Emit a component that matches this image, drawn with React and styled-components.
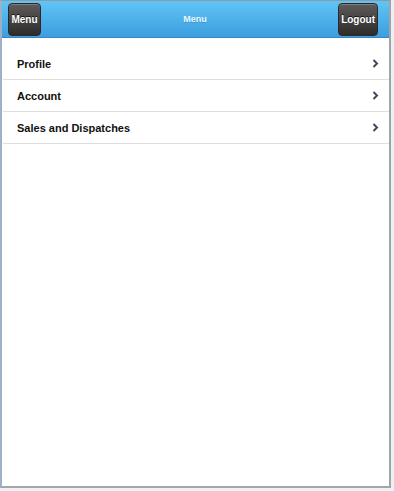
import React from "react";
import styled, { createGlobalStyle } from "styled-components";

const Global = createGlobalStyle`
  html, body { margin: 0; padding: 0; background: #eef1f4; }
  body { font-family: "Liberation Sans", Arial, sans-serif; }
`;

const Page = styled.div`
  width: 394px;
  height: 491px;
  box-sizing: border-box;
  padding: 0 3px 3px 0;
  background: #eef1f4;
`;

const Frame = styled.div`
  height: 100%;
  box-sizing: border-box;
  display: flex;
  flex-direction: column;
  background: #ffffff;
  border-top: 1px solid #8d99a6;
  border-left: 2px solid #9fb0c6;
  border-right: 2px solid #a3a3a3;
  border-bottom: 2px solid #a6a6a6;
`;

const Header = styled.header`
  height: 37px;
  box-sizing: border-box;
  display: grid;
  grid-template-columns: 1fr auto 1fr;
  align-items: center;
  padding: 0 11px 0 6px;
  background: linear-gradient(#60c5f6, #3c9edf);
  border-bottom: 1px solid #3a88bf;
`;

const HeadButton = styled.button`
  justify-self: ${(p) => p.$side};
  height: 33px;
  min-width: ${(p) => p.$w}px;
  box-sizing: border-box;
  padding: 0 2px;
  margin-top: 1px;
  border: 1px solid #2a2a2a;
  border-radius: 4px;
  background: linear-gradient(#5e5a5a, #2f2c2c);
  box-shadow: inset 0 1px 0 rgba(255, 255, 255, 0.2);
  color: #ffffff;
  font-family: "Liberation Sans", Arial, sans-serif;
  font-weight: bold;
  font-size: 10px;
  text-shadow: 0 -1px 0 #111;
  cursor: pointer;
`;

const Title = styled.h1`
  margin: 0 0 0 4px;
  font-size: 9px;
  font-weight: bold;
  color: #eaf7ff;
  text-shadow: 0 1px 0 rgba(0, 0, 0, 0.15);
`;

const List = styled.ul`
  list-style: none;
  margin: 10px 0 0 0;
  padding: 0 0 0 1px;
`;

const Row = styled.li`
  height: 31px;
  display: flex;
  align-items: center;
  justify-content: space-between;
  padding: 0 10px 0 14px;
  border-bottom: 1px solid #dedede;
  font-size: 11px;
  font-weight: bold;
  color: #111111;
  cursor: pointer;
`;

const Chevron = () => (
  <svg width="7" height="9" viewBox="0 0 7 9">
    <path d="M1.5 1 L5 4.5 L1.5 8" fill="none" stroke="#3a4a5a" strokeWidth="2" />
  </svg>
);

const items = ["Profile", "Account", "Sales and Dispatches"];

export default function App() {
  return (
    <Page>
      <Global />
      <Frame>
        <Header>
          <HeadButton $w={33} $side="start">Menu</HeadButton>
          <Title>Menu</Title>
          <HeadButton $w={39} $side="end">Logout</HeadButton>
        </Header>
        <List>
          {items.map((t) => (
            <Row key={t}>
              <span>{t}</span>
              <Chevron />
            </Row>
          ))}
        </List>
      </Frame>
    </Page>
  );
}
